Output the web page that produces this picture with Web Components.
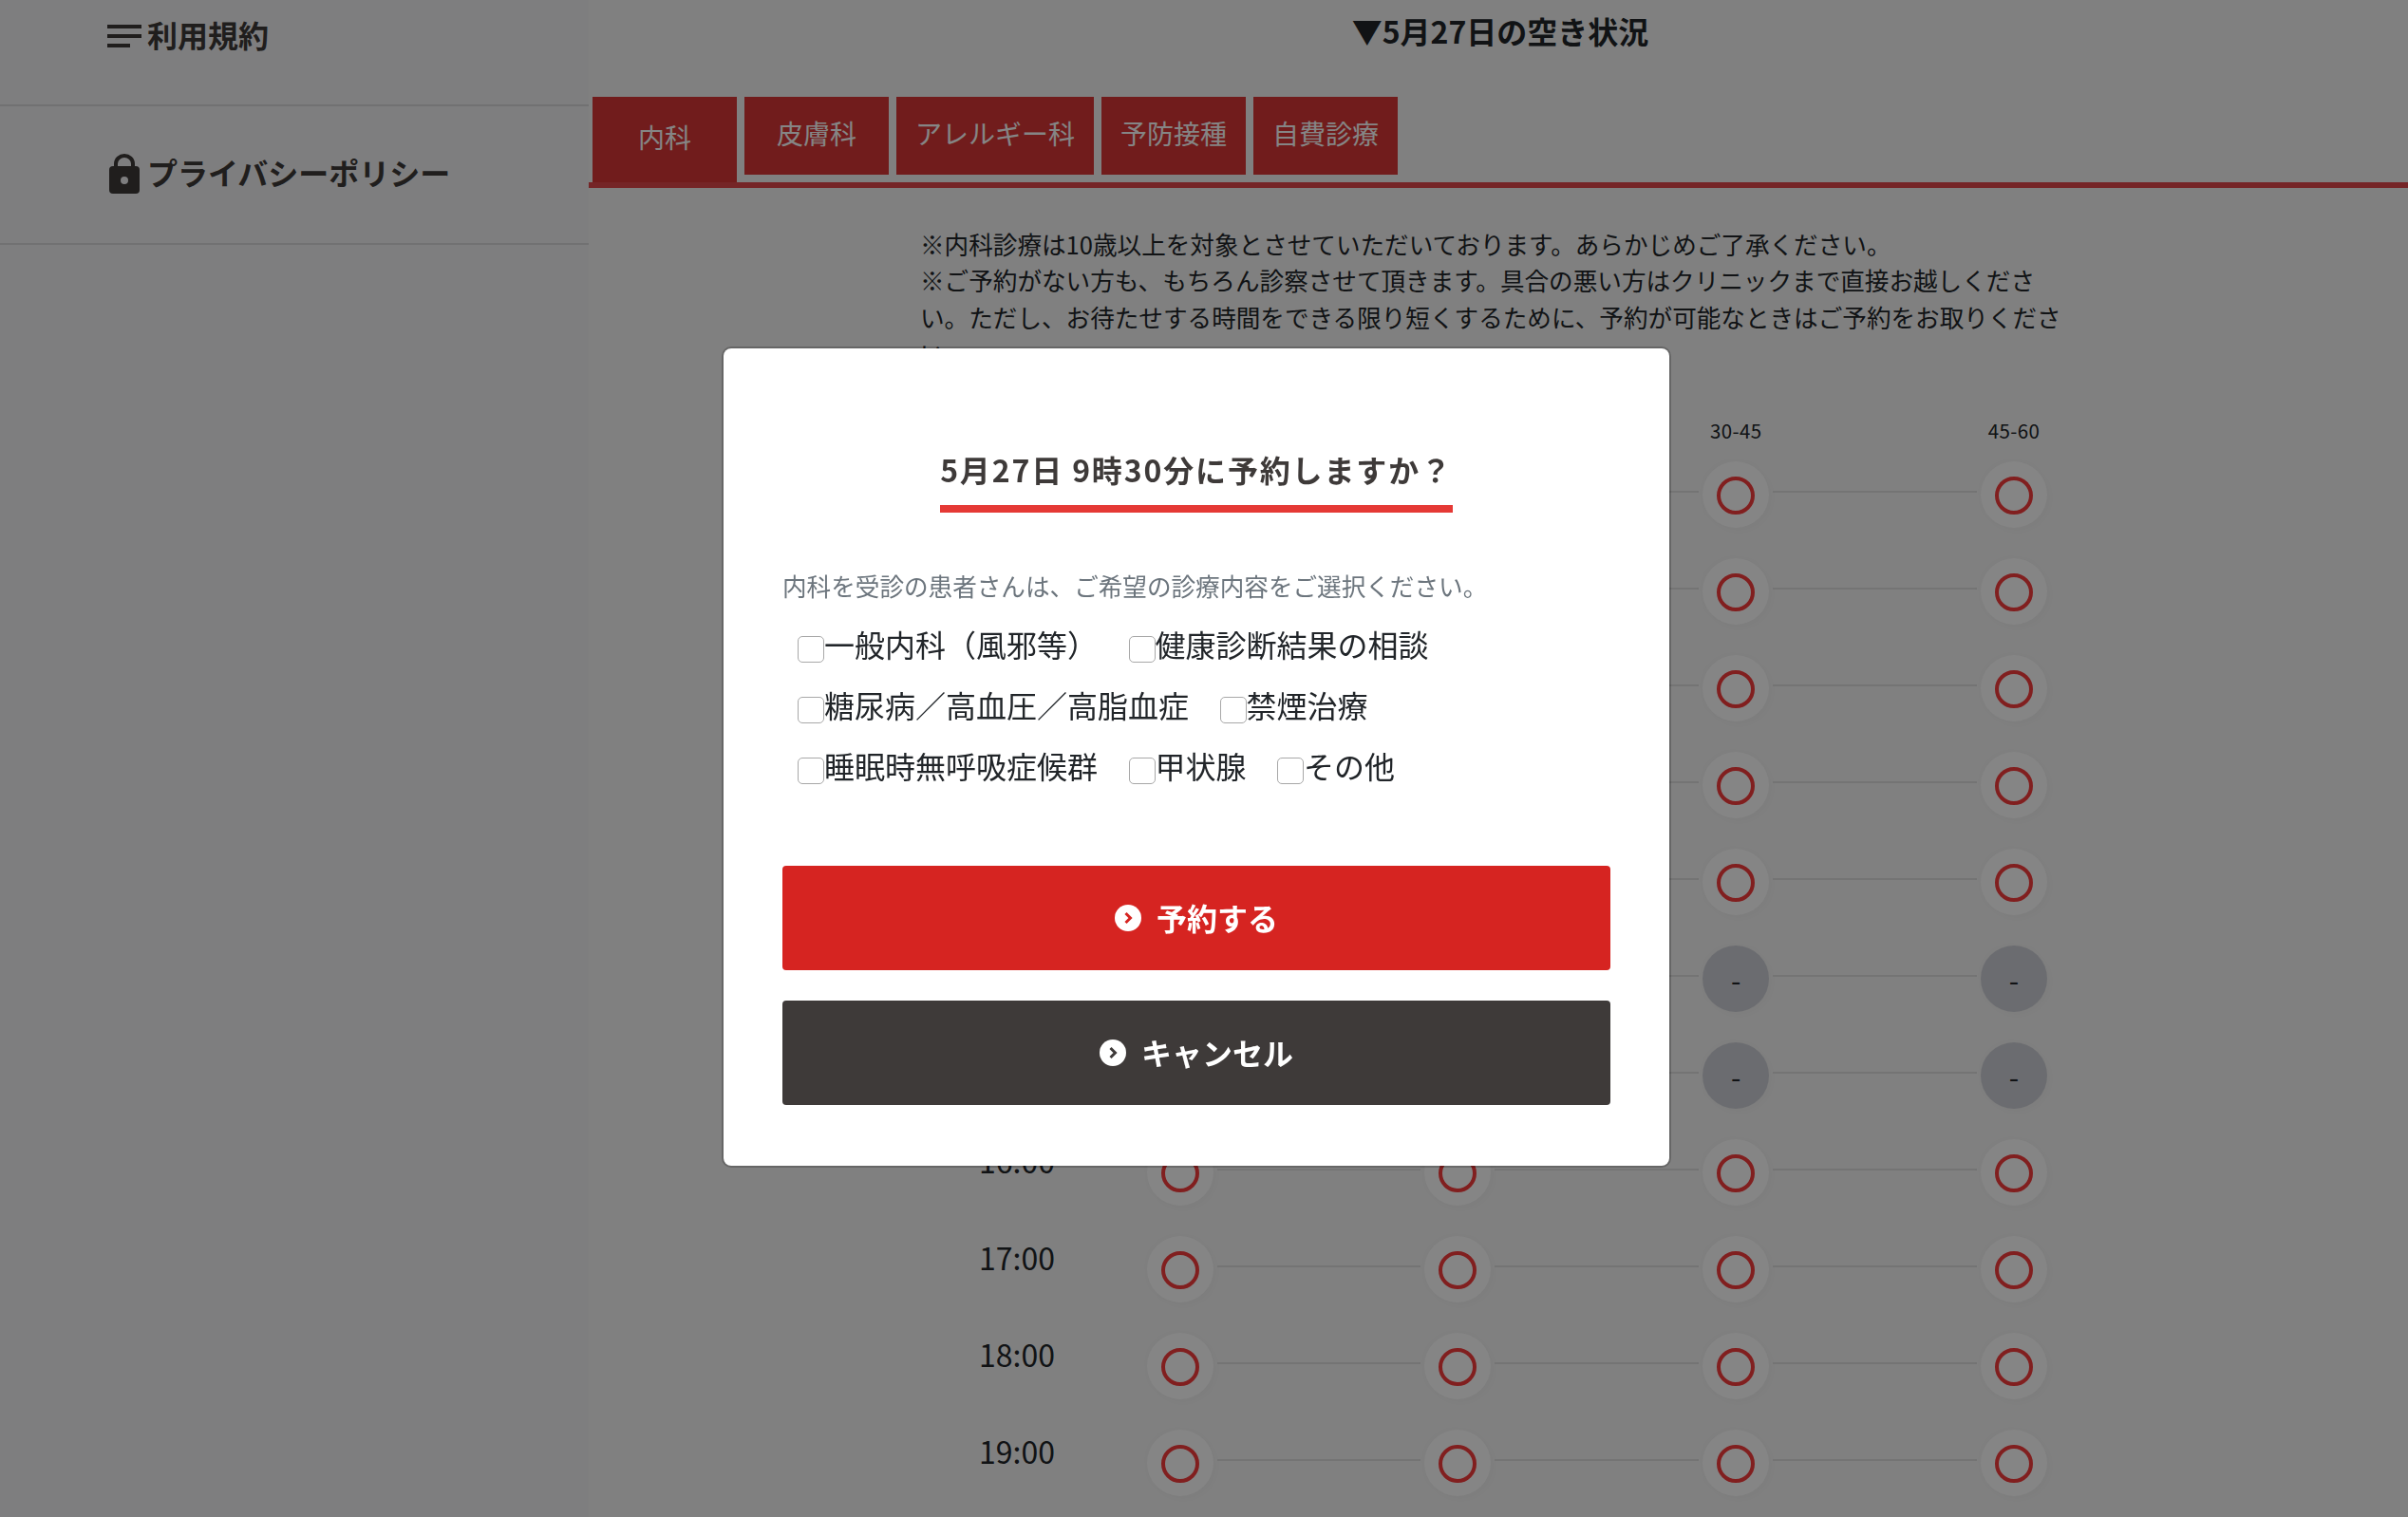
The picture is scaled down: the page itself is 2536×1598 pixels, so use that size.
<!DOCTYPE html>
<html lang="ja">
<head>
<meta charset="utf-8">
<title>予約</title>
<style>
    html, body { margin: 0; height: 100%; overflow: hidden; background: #f6f6f6; }
    body { font-family: "Noto Sans CJK JP", "Noto Sans", sans-serif; color: #212529; }
</style>
</head>
<body>
<booking-page>
    <side-nav slot="nav">
        <side-link icon="menu" first>利用規約</side-link>
        <side-link icon="lock">プライバシーポリシー</side-link>
    </side-nav>

    <availability-heading>▼5月27日の空き状況</availability-heading>
    <clinic-tabs>
        <clinic-tab active>内科</clinic-tab>
        <clinic-tab>皮膚科</clinic-tab>
        <clinic-tab>アレルギー科</clinic-tab>
        <clinic-tab>予防接種</clinic-tab>
        <clinic-tab>自費診療</clinic-tab>
    </clinic-tabs>
    <notice-text>
        <div>※内科診療は10歳以上を対象とさせていただいております。あらかじめご了承ください。</div>
        <div>※ご予約がない方も、もちろん診察させて頂きます。具合の悪い方はクリニックまで直接お越しください。ただし、お待たせする時間をできる限り短くするために、予約が可能なときはご予約をお取りください。</div>
    </notice-text>
    <slot-table></slot-table>
</booking-page>

<reserve-modal heading="5月27日 9時30分に予約しますか？" lead="内科を受診の患者さんは、ご希望の診療内容をご選択ください。">
    <check-option slot="options">一般内科（風邪等）</check-option>
    <check-option slot="options">健康診断結果の相談</check-option>
    <check-option slot="options">糖尿病／高血圧／高脂血症</check-option>
    <check-option slot="options">禁煙治療</check-option>
    <check-option slot="options">睡眠時無呼吸症候群</check-option>
    <check-option slot="options">甲状腺</check-option>
    <check-option slot="options">その他</check-option>
    <action-button slot="actions" color="#d62421">予約する</action-button>
    <action-button slot="actions" color="#3e3a39">キャンセル</action-button>
</reserve-modal>

<script>
const ICONS = {
    menu: `<svg width="36" height="24" viewBox="0 0 36 24"><path fill="currentColor" d="M0 0h36v4H0zM0 10h36v4H0zM0 20h24v4H0z"/></svg>`,
    lock: `<svg width="36" height="42" viewBox="0 0 36 42">
        <path fill="none" stroke="currentColor" stroke-width="4" d="M9 15V10.500a9 8.500 0 0 1 18 0V15"/>
        <rect x="2" y="13" width="32" height="29" rx="4" fill="currentColor"/>
        <circle cx="18" cy="28" r="4" fill="#f2f2f4"/>
    </svg>`,
};

// hours whose time label sits behind the open dialog
const COVERED_UNTIL = 15;

// shared helper, every element below sets its shadow markup once
class ShadowElement extends HTMLElement {
    constructor() {
        super();
        this.attachShadow({ mode: 'open' });
    }

    connectedCallback() {
        this.render();
    }
}

class BookingPage extends ShadowElement {
    render() {
        this.shadowRoot.innerHTML = `
            <style>
                :host { display: grid; grid-template-columns: 620px 1fr; height: 1598px; overflow: hidden; background: #f6f6f6; }
                main { min-width: 0; }
            </style>
            <slot name="nav"></slot>
            <main><slot></slot></main>
        `;
    }
}

class SideNav extends ShadowElement {
    render() {
        this.shadowRoot.innerHTML = `
            <style>
                :host { display: block; background: #f2f2f4; }
            </style>
            <slot></slot>
        `;
    }
}

class SideLink extends ShadowElement {
    render() {
        const first = this.hasAttribute('first');
        this.shadowRoot.innerHTML = `
            <style>
                :host {
                    display: flex;
                    align-items: center;
                    gap: 6px;
                    padding: ${first ? '14px 0 48px 113px' : '47px 0 49px 113px'};
                    border-bottom: 2px solid #d8d8da;
                    font-size: 32px;
                    line-height: 48px;
                    font-weight: 700;
                    color: #3e3a39;
                    white-space: nowrap;
                }
                svg { display: block; flex: none; }
                span { height: 48px; margin: -2px 0 2px; }
            </style>
            ${ICONS[this.getAttribute('icon')]}
            <span><slot></slot></span>
        `;
    }
}

class AvailabilityHeading extends ShadowElement {
    render() {
        this.shadowRoot.innerHTML = `
            <style>
                :host {
                    display: block;
                    height: 94px;
                    padding: 8px 0 0 4px;
                    text-align: center;
                    font-size: 32px;
                    line-height: 48px;
                    font-weight: 700;
                    color: #212529;
                }
            </style>
            <slot></slot>
        `;
    }
}

class ClinicTabs extends ShadowElement {
    render() {
        this.shadowRoot.innerHTML = `
            <style>
                :host {
                    display: flex;
                    align-items: flex-start;
                    gap: 8px;
                    height: 90px;
                    padding-left: 4px;
                    border-bottom: 6px solid #e0484c;
                }
            </style>
            <slot></slot>
        `;
    }
}

class ClinicTab extends ShadowElement {
    render() {
        const active = this.hasAttribute('active');
        this.shadowRoot.innerHTML = `
            <style>
                :host {
                    display: flex;
                    align-items: center;
                    justify-content: center;
                    box-sizing: border-box;
                    min-width: 152px;
                    height: ${active ? 90 : 82}px;
                    padding: 0 20px;
                    background: #d83636;
                    color: #fff;
                    font-size: 28px;
                    line-height: 42px;
                    white-space: nowrap;
                }
                span { margin-top: -6px; }
            </style>
            <span><slot></slot></span>
        `;
    }
}

class NoticeText extends ShadowElement {
    render() {
        this.shadowRoot.innerHTML = `
            <style>
                :host {
                    display: block;
                    width: 1210px;
                    margin: 40px 0 0 349px;
                    font-size: 25.6px;
                    line-height: 38.4px;
                    color: #212529;
                }
            </style>
            <slot></slot>
        `;
    }
}

class SlotTable extends ShadowElement {
    render() {
        const rows = [];
        for (let hour = 9; hour <= 19; hour++) {
            const closed = hour === 14 || hour === 15;
            const time = hour > COVERED_UNTIL ? `${hour}:00` : '';
            rows.push(`<slot-row time="${time}"${closed ? ' closed' : ''}></slot-row>`);
        }
        const labels = ['', '', '30-45', '45-60'].map((label) => `<span>${label}</span>`).join('');
        this.shadowRoot.innerHTML = `
            <style>
                :host { display: block; margin: 48px 0 0 350px; }
                .head {
                    display: flex;
                    gap: 222.830px;
                    height: 30px;
                    padding-left: 237.500px;
                    font-size: 20.48px;
                    line-height: 26px;
                    letter-spacing: 0.4px;
                    color: #212529;
                }
                .head span { flex: none; width: 70px; text-align: center; white-space: nowrap; }
            </style>
            <div class="head">${labels}</div>
            ${rows.join('')}
        `;
    }
}

class SlotRow extends ShadowElement {
    render() {
        const closed = this.hasAttribute('closed');
        const cell = (i) => closed && i > 1
            ? '<div class="halo off"><span>-</span></div>'
            : '<div class="halo"><i></i></div>';
        this.shadowRoot.innerHTML = `
            <style>
                :host { display: flex; align-items: center; height: 102px; width: 1220px; }
                .time {
                    flex: none;
                    box-sizing: border-box;
                    width: 237.500px;
                    height: 48px;
                    padding-left: 61px;
                    margin-bottom: 26px;
                    font-size: 32px;
                    line-height: 48px;
                    color: #212529;
                }
                .halo {
                    flex: none;
                    display: flex;
                    align-items: center;
                    justify-content: center;
                    width: 70px;
                    height: 70px;
                    border-radius: 50%;
                    background: #fff;
                    box-shadow: 3px 3px 10px rgba(0, 0, 0, 0.03), -3px -3px 10px rgba(0, 0, 0, 0.015);
                }
                .halo i {
                    display: block;
                    box-sizing: border-box;
                    width: 40px;
                    height: 40px;
                    margin-top: 2px;
                    border: 4px solid #f83c3c;
                    border-radius: 50%;
                }
                .off { background: #ced0d7; }
                .off span { font-size: 30px; line-height: 34px; color: #212529; }
                .line { flex: none; width: 214.830px; height: 2px; margin: -6px 4px 0; background: #dedede; }
            </style>
            <div class="time">${this.getAttribute('time')}</div>
            ${cell(0)}<div class="line"></div>
            ${cell(1)}<div class="line"></div>
            ${cell(2)}<div class="line"></div>
            ${cell(3)}
        `;
    }
}

class ReserveModal extends ShadowElement {
    render() {
        this.shadowRoot.innerHTML = `
            <style>
                :host { display: block; }
                .backdrop { position: fixed; inset: 0; background: rgba(0, 0, 0, 0.48); }
                .dialog {
                    position: absolute;
                    left: 760px;
                    top: 365px;
                    box-sizing: border-box;
                    width: 1000px;
                    height: 865px;
                    padding: 103px 62px 64px;
                    border: 2px solid rgba(0, 0, 0, 0.2);
                    border-radius: 10px;
                    background: #fff;
                    background-clip: padding-box;
                    color: #212529;
                }
                .head { text-align: center; }
                h2 {
                    display: inline-block;
                    margin: 0;
                    padding-bottom: 14px;
                    border-bottom: 8px solid #e53935;
                    font-size: 32px;
                    line-height: 48px;
                    font-weight: 700;
                    letter-spacing: 1.850px;
                    color: #3e3a39;
                    vertical-align: top;
                }
                p {
                    margin: 58px 0 0;
                    font-size: 25.6px;
                    line-height: 38.4px;
                    color: #6c757d;
                }
                .options {
                    display: flex;
                    flex-wrap: wrap;
                    column-gap: 33.500px;
                    margin: 12px 0 72px;
                    padding-left: 17px;
                }
                .actions { display: flex; flex-direction: column; gap: 32px; }
            </style>
            <div class="backdrop"></div>
            <div class="dialog">
                <div class="head"><h2>${this.getAttribute('heading')}</h2></div>
                <p>${this.getAttribute('lead')}</p>
                <div class="options"><slot name="options"></slot></div>
                <div class="actions"><slot name="actions"></slot></div>
            </div>
        `;
    }
}

class CheckOption extends ShadowElement {
    render() {
        this.shadowRoot.innerHTML = `
            <style>
                :host { display: inline-block; }
                label {
                    display: flex;
                    align-items: center;
                    height: 64px;
                    font-size: 32px;
                    line-height: 48px;
                    color: #212529;
                    white-space: nowrap;
                }
                input {
                    appearance: none;
                    flex: none;
                    box-sizing: border-box;
                    width: 28px;
                    height: 28px;
                    margin: 8px 0 0 -1px;
                    border: 1.500px solid #a8a8a8;
                    border-radius: 5px;
                    background: #fff;
                }
                span { margin-top: -4px; }
            </style>
            <label><input type="checkbox"><span><slot></slot></span></label>
        `;
    }
}

class ActionButton extends ShadowElement {
    render() {
        const color = this.getAttribute('color');
        this.shadowRoot.innerHTML = `
            <style>
                :host {
                    display: flex;
                    align-items: center;
                    justify-content: center;
                    gap: 16px;
                    height: 110px;
                    border-radius: 4px;
                    background: ${color};
                    color: #fff;
                    font-size: 32px;
                    line-height: 48px;
                    font-weight: 700;
                }
                svg { display: block; flex: none; }
                span { margin-top: -3px; }
            </style>
            <svg width="28" height="28" viewBox="0 0 28 28">
                <circle cx="14" cy="14" r="14" fill="#fff"/>
                <path d="M11.500 9l5 5-5 5" fill="none" stroke="${color}" stroke-width="3"/>
            </svg>
            <span><slot></slot></span>
        `;
    }
}

customElements.define('booking-page', BookingPage);
customElements.define('side-nav', SideNav);
customElements.define('side-link', SideLink);
customElements.define('availability-heading', AvailabilityHeading);
customElements.define('clinic-tabs', ClinicTabs);
customElements.define('clinic-tab', ClinicTab);
customElements.define('notice-text', NoticeText);
customElements.define('slot-table', SlotTable);
customElements.define('slot-row', SlotRow);
customElements.define('reserve-modal', ReserveModal);
customElements.define('check-option', CheckOption);
customElements.define('action-button', ActionButton);
</script>
</body>
</html>
